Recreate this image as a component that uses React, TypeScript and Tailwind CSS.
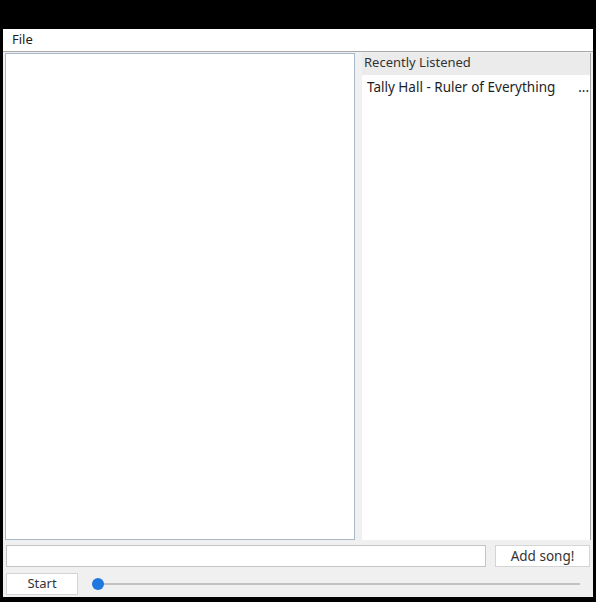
import React from "react";

export default function App() {
  return (
    <div
      className="w-[596px] h-[602px] bg-black pt-[29px] pl-[3px] pr-[3px] pb-[5px] text-[13.5px] text-[#1e1e1e]"
      style={{ fontFamily: '"Noto Sans", "DejaVu Sans", sans-serif' }}
    >
      <div className="flex flex-col h-full bg-[#f0f0f0]">
        <div className="h-[23px] bg-white border-b border-[#a8a8a8] flex items-center pl-[9px] text-[13px]">
          File
        </div>
        <div className="flex h-[487px] mt-[1px] pl-[2px] pr-[2px]">
          <div className="w-[350px] h-full bg-white border border-[#a9b8c9]" />
          <div className="flex-1 h-full border-r border-[#a8a8a8] pl-[7px] flex flex-col">
            <div className="h-[22px] bg-[#ebebeb] flex items-center pl-[2px] pb-[2px] text-[#333] text-[13px]">
              Recently Listened
            </div>
            <div className="flex-1 bg-white">
              <div className="h-[22px] flex items-center justify-between pl-[5px] pr-[1px] pt-[2px]">
                <span>Tally Hall - Ruler of Everything</span>
                <span>...</span>
              </div>
            </div>
          </div>
        </div>
        <div className="flex mt-[5px] h-[22px] pl-[3px] pr-[3px] gap-[9px]">
          <div className="w-[480px] h-full bg-white border border-[#c4c4c4]" />
          <button className="flex-1 h-full bg-white border border-[#d4d4d4] text-[#333] flex items-center justify-center">
            Add song!
          </button>
        </div>
        <div className="flex items-center mt-[6px] h-[22px] pl-[3px] pr-[13px]">
          <button className="w-[72px] h-full bg-white border border-[#d4d4d4] text-[#333] flex items-center justify-center text-[13px]">
            Start
          </button>
          <div className="relative flex-1 ml-[14px] h-full flex items-center">
            <div className="w-full h-[2px] bg-[#c2c2c2]" />
            <div className="absolute left-0 top-1/2 -translate-y-1/2 w-[12px] h-[12px] rounded-full bg-[#1f77e0]" />
          </div>
        </div>
      </div>
    </div>
  );
}
